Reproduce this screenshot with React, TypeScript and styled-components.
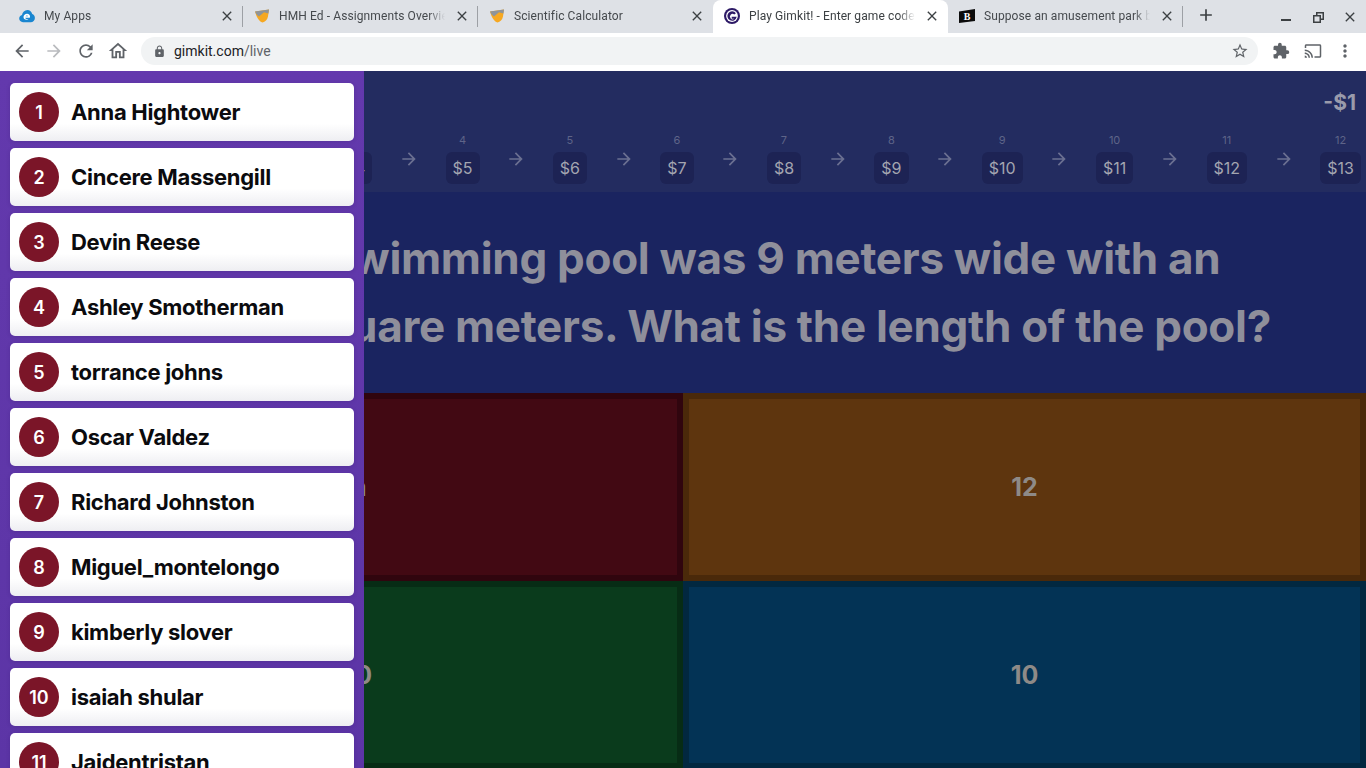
import React from 'react';
import styled, { createGlobalStyle } from 'styled-components';
import { MdArrowBack, MdArrowForward, MdRefresh, MdOutlineHome, MdStarBorder, MdExtension, MdCast, MdMoreVert, MdLock, MdClose, MdAdd } from 'react-icons/md';

const GlobalStyle = createGlobalStyle`
  html, body { margin: 0; padding: 0; height: 100%; overflow: hidden; background: #232c60; }
  * { box-sizing: border-box; }
`;

const gameFont = `Inter, Lato, sans-serif`;

const players = [
  'Anna Hightower', 'Cincere Massengill', 'Devin Reese', 'Ashley Smotherman', 'torrance johns', 'Oscar Valdez',
  'Richard Johnston', 'Miguel_montelongo', 'kimberly slover', 'isaiah shular', 'Jaidentristan',
];

const ladder = [
  { step: 1, value: '$2' }, { step: 2, value: '$3' }, { step: 3, value: '$4' }, { step: 4, value: '$5' },
  { step: 5, value: '$6' }, { step: 6, value: '$7' }, { step: 7, value: '$8' }, { step: 8, value: '$9' },
  { step: 9, value: '$10' }, { step: 10, value: '$11' }, { step: 11, value: '$12' }, { step: 12, value: '$13' },
];

const Page = styled.div`
  height: 768px;
  display: flex;
  flex-direction: column;
  overflow: hidden;
`;

/* browser chrome */
const TabStrip = styled.div`
  height: 33px;
  padding-left: 8px;
  display: flex;
  background: #dee1e6;
  font-family: Roboto, sans-serif;
`;

const Tab = styled.div<{ $active?: boolean; $divider?: boolean }>`
  width: 235px;
  height: 33px;
  padding: 0 8px 2px 11px;
  display: flex;
  align-items: center;
  gap: 9px;
  position: relative;
  border-radius: 8px 8px 0 0;
  background: ${(p) => (p.$active ? '#fff' : 'transparent')};

  &::after {
    content: '';
    display: ${(p) => (p.$divider ? 'block' : 'none')};
    position: absolute;
    top: 6px;
    right: 0;
    width: 1px;
    height: 21px;
    background: #9da0a5;
  }
`;

const FavSlot = styled.span`
  width: 16px;
  height: 16px;
  flex: none;
  display: block;
`;

const TabTitle = styled.span<{ $active?: boolean }>`
  flex: 1;
  min-width: 0;
  font-size: 12px;
  letter-spacing: 0.1px;
  white-space: nowrap;
  overflow: hidden;
  color: ${(p) => (p.$active ? '#3c4043' : '#45494d')};
  -webkit-mask-image: linear-gradient(to right, #000 90%, transparent 100%);
  mask-image: linear-gradient(to right, #000 90%, transparent 100%);
`;

const TabClose = styled(MdClose)`
  flex: none;
  width: 16px;
  height: 16px;
  color: #3c4043;
`;

const NewTab = styled(MdAdd)`
  width: 20px;
  height: 20px;
  margin: 5px 0 0 13px;
  color: #3c4043;
`;

const WindowButtons = styled.div`
  margin-left: auto;
  padding-right: 8px;
  display: flex;
  align-items: center;
  gap: 16px;
  height: 33px;
`;

const WindowIcon = styled.svg`
  width: 16px;
  height: 16px;
  display: block;
  color: #3c4043;
`;

const Toolbar = styled.div`
  height: 38px;
  padding: 4px 5px 6px 6px;
  display: flex;
  align-items: center;
  background: #fff;
  font-family: Roboto, sans-serif;
`;

const NavButton = styled.span<{ $off?: boolean; $size?: number }>`
  width: 32px;
  display: flex;
  justify-content: center;
  color: ${(p) => (p.$off ? '#b9bbbe' : '#5f6368')};
  font-size: ${(p) => p.$size ?? 20}px;
`;

const AddressPill = styled.div`
  flex: 1;
  height: 28px;
  margin: 0 7px 0 7px;
  padding: 0 9px 0 12px;
  display: flex;
  align-items: center;
  border-radius: 14px;
  background: #f1f3f4;
  font-size: 14px;
  color: #5f6368;
`;

const LockIcon = styled(MdLock)`
  width: 13px;
  height: 13px;
  margin-right: 8px;
  color: #5f6368;
`;

const Host = styled.span`
  color: #202124;
`;

const PillStar = styled(MdStarBorder)`
  margin-left: auto;
  width: 18px;
  height: 18px;
  color: #5f6368;
`;

/* game */
const Stage = styled.div`
  flex: 1;
  min-height: 0;
  position: relative;
  overflow: hidden;
  font-family: ${gameFont};
`;

const Sidebar = styled.aside`
  position: absolute;
  top: 0;
  left: 0;
  bottom: 0;
  width: 364px;
  padding: 12px 10px;
  display: flex;
  flex-direction: column;
  gap: 7px;
  overflow: hidden;
  background: linear-gradient(#6339ad, #5c35a6);
`;

const PlayerCard = styled.div`
  flex: none;
  height: 58px;
  padding: 0 9px;
  display: flex;
  align-items: center;
  gap: 12px;
  border-radius: 5px;
  background: linear-gradient(#fff 70%, #eeeef2 100%);
  box-shadow: 0 1px 4px rgba(40, 20, 90, 0.2);
`;

const Rank = styled.span`
  width: 40px;
  height: 40px;
  flex: none;
  display: flex;
  align-items: center;
  justify-content: center;
  border-radius: 50%;
  background: #7b1528;
  color: #fff;
  font-size: 18px;
  font-weight: 600;
`;

const PlayerName = styled.span`
  font-size: 22px;
  font-weight: 700;
  letter-spacing: -0.3px;
  color: #0b0b0e;
`;

const Header = styled.div`
  height: 121px;
  padding-bottom: 8px;
  display: flex;
  flex-direction: column;
  justify-content: flex-end;
  background: #232c60;
  position: relative;
`;

const Balance = styled.div`
  position: absolute;
  top: 19px;
  right: 10px;
  font-size: 21px;
  font-weight: 700;
  color: #9a9bab;
`;

const LadderRow = styled.div`
  display: flex;
  align-items: center;
  justify-content: flex-end;
  padding-right: 5px;
  overflow: hidden;
`;

const LadderStep = styled.div`
  flex: none;
  display: flex;
  flex-direction: column;
  align-items: center;
  gap: 5px;
`;

const StepNumber = styled.span`
  font-size: 11px;
  line-height: 13px;
  color: #5e6488;
`;

const StepChip = styled.span`
  height: 32px;
  padding: 0 7px 1px;
  min-width: 33px;
  display: flex;
  align-items: center;
  justify-content: center;
  border-radius: 6px;
  background: #1d2354;
  font-size: 16px;
  color: #a3a5b0;
`;

const StepArrow = styled(MdArrowForward)`
  flex: none;
  width: 20px;
  height: 20px;
  margin: 0 26.65px;
  color: #6b7091;
`;

const QuestionBox = styled.div`
  height: 201px;
  padding-bottom: 2px;
  display: flex;
  align-items: center;
  justify-content: center;
  background: #1a2460;
`;

const QuestionText = styled.div`
  width: 1300px;
  text-align: center;
  font-size: 44px;
  line-height: 68px;
  font-weight: 700;
  letter-spacing: -0.3px;
  color: #8f8f9b;
`;

/* the start of each line sits behind the sidebar */
const LeadWords = styled.span`
  letter-spacing: -2.3px;
`;

const AnswerGrid = styled.div`
  display: grid;
  grid-template-columns: 683px 683px;
  grid-auto-rows: 188px;
`;

const Answer = styled.div<{ $fill: string; $edge: string }>`
  display: flex;
  align-items: center;
  justify-content: center;
  border: 6px solid ${(p) => p.$edge};
  background: ${(p) => p.$fill};
  font-size: 25px;
  font-weight: 700;
  color: #8e8a87;
`;

function CloudFav() {
  return (
    <FavSlot>
      <svg width="16" height="16" viewBox="0 0 16 16">
        <path d="M4 14.2C1.8 14.2.2 12.6.2 10.6c0-1.8 1.2-3.1 2.8-3.5C3.5 4.2 5.6 2 8.4 2c2.5 0 4.3 1.7 4.8 4 1.6.4 2.7 2 2.7 3.9 0 2.5-1.9 4.3-4.2 4.3z" fill="#1a86d0" />
        <path d="M10.8 9.7H6.2c.2 1.2 1.8 1.8 3.7 1 -2 2-5.4 1.1-5.4-1.6 0-2.7 3.4-4.3 5.6-2.6 1 .8 1.1 2.2.7 3.2zM6.5 8.3h2.7c-.3-1.1-2.1-1.2-2.7 0z" fill="#fff" />
      </svg>
    </FavSlot>
  );
}

function ShieldFav() {
  return (
    <FavSlot>
      <svg width="16" height="16" viewBox="0 0 16 16">
        <path d="M1 3.5l14-2-1 7c-.5 3-3 5.5-5.5 6C5 13.5 2.5 9 1 3.5z" fill="#f6a821" />
        <path d="M1 3.5l14-2-.6 4-4.4-1.2L5 8.5C3.3 7.5 1.9 5.5 1 3.5z" fill="#8f9499" />
      </svg>
    </FavSlot>
  );
}

function GimkitFav() {
  return (
    <FavSlot>
      <svg width="16" height="16" viewBox="0 0 16 16">
        <circle cx="8" cy="8" r="8" fill="#2d1a66" />
        <circle cx="8" cy="8" r="5.9" fill="#fff" />
        <path d="M11.9 5.3A4.7 4.7 0 1 0 12.7 8.8H7.7v2h2.6A2.7 2.7 0 1 1 10.3 6.5z" fill="#2d1a66" />
      </svg>
    </FavSlot>
  );
}

function BrainlyFav() {
  return (
    <FavSlot>
      <svg width="16" height="16" viewBox="0 0 16 16">
        <path d="M0 3.5L16 1v12L0 15z" fill="#0c0c0c" />
        <text x="8" y="12" textAnchor="middle" fontFamily="'Liberation Serif', serif" fontWeight="700" fontSize="10" fill="#fff">B</text>
      </svg>
    </FavSlot>
  );
}

function MinimizeIcon() {
  return (
    <WindowIcon viewBox="0 0 16 16"><rect x="3" y="10" width="10" height="2" fill="currentColor" /></WindowIcon>
  );
}

function RestoreIcon() {
  return (
    <WindowIcon viewBox="0 0 16 16">
      <path d="M6 3h8v8h-3v3H3V6h3zm1.5 1.5V6H11v3.5h1.5v-5zM4.5 7.5v5h5v-5z" fill="currentColor" fillRule="evenodd" />
    </WindowIcon>
  );
}

export default function App() {
  const answers = [
    { text: '11 m', fill: '#420913', edge: '#30050e' },
    { text: '12', fill: '#5e350e', edge: '#4a290a' },
    { text: '1000', fill: '#0a3b1c', edge: '#072c15' },
    { text: '10', fill: '#033355', edge: '#022840' },
  ];

  return (
    <Page>
      <GlobalStyle />
      <TabStrip>
        <Tab $divider>
          <CloudFav />
          <TabTitle>My Apps</TabTitle>
          <TabClose />
        </Tab>
        <Tab $divider>
          <ShieldFav />
          <TabTitle>HMH Ed - Assignments Overview</TabTitle>
          <TabClose />
        </Tab>
        <Tab>
          <ShieldFav />
          <TabTitle>Scientific Calculator</TabTitle>
          <TabClose />
        </Tab>
        <Tab $active>
          <GimkitFav />
          <TabTitle $active>Play Gimkit! - Enter game code here</TabTitle>
          <TabClose />
        </Tab>
        <Tab $divider>
          <BrainlyFav />
          <TabTitle>Suppose an amusement park be</TabTitle>
          <TabClose />
        </Tab>
        <NewTab />
        <WindowButtons>
          <MinimizeIcon />
          <RestoreIcon />
          <TabClose />
        </WindowButtons>
      </TabStrip>
      <Toolbar>
        <NavButton><MdArrowBack /></NavButton>
        <NavButton $off><MdArrowForward /></NavButton>
        <NavButton><MdRefresh /></NavButton>
        <NavButton $size={22}><MdOutlineHome /></NavButton>
        <AddressPill>
          <LockIcon />
          <Host>gimkit.com</Host>/live
          <PillStar />
        </AddressPill>
        <NavButton $size={18}><MdExtension /></NavButton>
        <NavButton $size={18}><MdCast /></NavButton>
        <NavButton><MdMoreVert /></NavButton>
      </Toolbar>
      <Stage>
        <Header>
          <Balance>-$1</Balance>
          <LadderRow>
            {ladder.map((s, i) => (
              <React.Fragment key={s.step}>
                {i > 0 && <StepArrow />}
                <LadderStep>
                  <StepNumber>{s.step}</StepNumber>
                  <StepChip>{s.value}</StepChip>
                </LadderStep>
              </React.Fragment>
            ))}
          </LadderRow>
        </Header>
        <QuestionBox>
          <QuestionText>
            <LeadWords>A heated </LeadWords>swimming pool was 9 meters wide with an
            <br />
            <LeadWords>area of 90 </LeadWords>square meters. What is the length of the pool?
          </QuestionText>
        </QuestionBox>
        <AnswerGrid>
          {answers.map((a) => (
            <Answer key={a.fill} $fill={a.fill} $edge={a.edge}>{a.text}</Answer>
          ))}
        </AnswerGrid>
        <Sidebar>
          {players.map((name, i) => (
            <PlayerCard key={name}>
              <Rank>{i + 1}</Rank>
              <PlayerName>{name}</PlayerName>
            </PlayerCard>
          ))}
        </Sidebar>
      </Stage>
    </Page>
  );
}
